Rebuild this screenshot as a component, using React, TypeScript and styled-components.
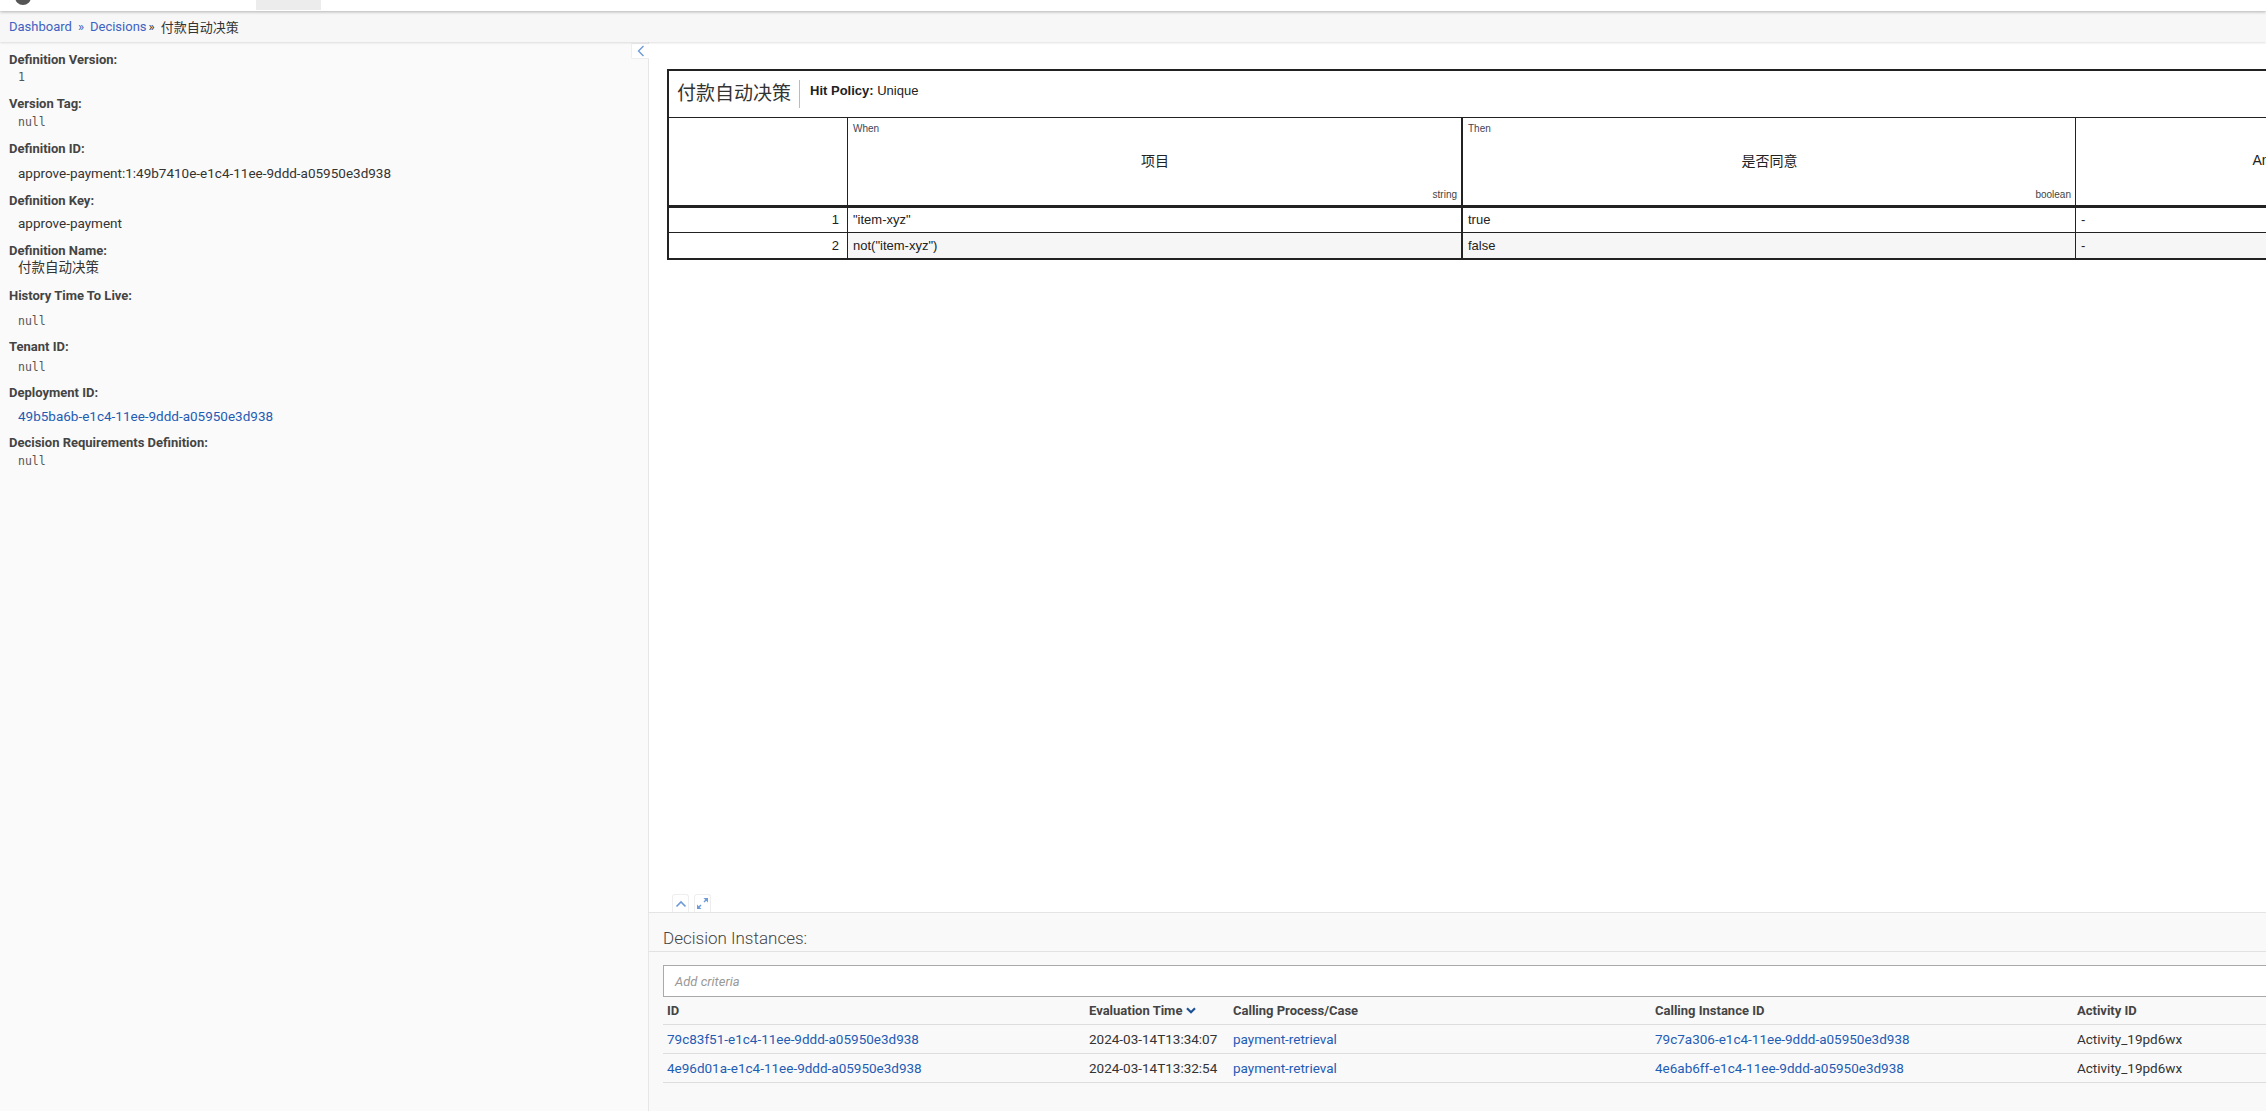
import React from "react";
import styled, { createGlobalStyle } from "styled-components";

const UI_FONT = `Roboto, "Noto Sans CJK SC", sans-serif`;
const DMN_FONT = `"Liberation Sans", Arial, "Noto Sans CJK SC", sans-serif`;
const MONO_FONT = `"DejaVu Sans Mono", "Liberation Mono", monospace`;
const LINK = "#1f5cb4";

const GlobalStyle = createGlobalStyle`
  * { box-sizing: border-box; }
  html, body { margin: 0; padding: 0; height: 100%; overflow: hidden; }
  body { font-family: ${UI_FONT}; color: #333; background: #fff; }
  #root { height: 100%; }
`;

interface Field {
  label: string;
  value: string;
  kind: "mono" | "text" | "link";
  spaceBefore: number;
  valueGap: number;
}

const fields: Field[] = [
  { label: "Definition Version:", value: "1", kind: "mono", spaceBefore: 0, valueGap: 1 },
  { label: "Version Tag:", value: "null", kind: "mono", spaceBefore: 11, valueGap: 2 },
  { label: "Definition ID:", value: "approve-payment:1:49b7410e-e1c4-11ee-9ddd-a05950e3d938", kind: "text", spaceBefore: 11, valueGap: 8 },
  { label: "Definition Key:", value: "approve-payment", kind: "text", spaceBefore: 12, valueGap: 6 },
  { label: "Definition Name:", value: "付款自动决策", kind: "text", spaceBefore: 12, valueGap: 0 },
  { label: "History Time To Live:", value: "null", kind: "mono", spaceBefore: 13, valueGap: 9 },
  { label: "Tenant ID:", value: "null", kind: "mono", spaceBefore: 10, valueGap: 4 },
  { label: "Deployment ID:", value: "49b5ba6b-e1c4-11ee-9ddd-a05950e3d938", kind: "link", spaceBefore: 10, valueGap: 7 },
  { label: "Decision Requirements Definition:", value: "null", kind: "mono", spaceBefore: 11, valueGap: 2 },
];

const instances = [
  {
    id: "79c83f51-e1c4-11ee-9ddd-a05950e3d938",
    time: "2024-03-14T13:34:07",
    process: "payment-retrieval",
    instance: "79c7a306-e1c4-11ee-9ddd-a05950e3d938",
    activity: "Activity_19pd6wx",
  },
  {
    id: "4e96d01a-e1c4-11ee-9ddd-a05950e3d938",
    time: "2024-03-14T13:32:54",
    process: "payment-retrieval",
    instance: "4e6ab6ff-e1c4-11ee-9ddd-a05950e3d938",
    activity: "Activity_19pd6wx",
  },
];

const rules = [
  { index: 1, input: `"item-xyz"`, output: "true", note: "-" },
  { index: 2, input: `not("item-xyz")`, output: "false", note: "-" },
];

const Page = styled.div`
  height: 100vh;
  display: flex;
  flex-direction: column;
`;

const TopBar = styled.header`
  position: relative;
  z-index: 3;
  height: 11px;
  flex: none;
  background: #fff;
  box-shadow: 0 1px 3px rgba(0, 0, 0, 0.28);
  display: flex;
  align-items: flex-start;
  overflow: hidden;
`;

const Logo = styled.div`
  width: 16px;
  height: 16px;
  margin: -11px 0 0 15px;
  border-radius: 50%;
  background: #555;
`;

const ActiveTab = styled.div`
  width: 65px;
  height: 10px;
  margin-left: 225px;
  background: #ececec;
`;

const Crumbs = styled.nav`
  position: relative;
  z-index: 2;
  height: 31px;
  flex: none;
  display: flex;
  align-items: center;
  padding-left: 9px;
  background: #f7f7f7;
  box-shadow: 0 1px 2px rgba(0, 0, 0, 0.12);
  font-size: 13px;
`;

const CrumbLink = styled.a`
  color: #3e62c2;
  text-decoration: none;
`;

const CrumbSep = styled.span<{ $before: number; $after: number; $dark?: boolean }>`
  color: ${(p) => (p.$dark ? "#333" : "#3e62c2")};
  font-size: 13px;
  margin: 0 ${(p) => p.$after}px 0 ${(p) => p.$before}px;
`;

const CrumbCurrent = styled.span`
  color: #333;
`;

const Body = styled.div`
  flex: 1;
  display: flex;
  min-height: 0;
`;

const Sidebar = styled.aside`
  position: relative;
  width: 649px;
  flex: none;
  background: #fafafa;
  border-right: 1px solid #e6e6e6;
  padding: 10px 0 0 9px;
`;

const CollapseButton = styled.button`
  position: absolute;
  top: 1px;
  right: -1px;
  width: 18px;
  height: 16px;
  padding: 0;
  display: flex;
  align-items: center;
  justify-content: center;
  background: #fff;
  border: 1px solid #eee;
  border-right: none;
  border-radius: 2px 0 0 2px;
`;

const FieldBlock = styled.dl<{ $space: number }>`
  margin: ${(p) => p.$space}px 0 0 0;
`;

const FieldLabel = styled.dt`
  font-size: 13px;
  line-height: 16px;
  font-weight: 700;
  color: #444;
`;

const FieldValue = styled.dd<{ $gap: number; $kind: Field["kind"] }>`
  margin: ${(p) => p.$gap}px 0 0 9px;
  line-height: 16px;
  font-family: ${(p) => (p.$kind === "mono" ? MONO_FONT : UI_FONT)};
  font-size: ${(p) => (p.$kind === "mono" ? "11.5px" : "13.5px")};
  color: ${(p) => (p.$kind === "link" ? LINK : p.$kind === "mono" ? "#555" : "#333")};
`;

const Main = styled.main`
  flex: 1;
  min-width: 0;
  display: flex;
  flex-direction: column;
  overflow: hidden;
`;

const Canvas = styled.section`
  flex: 1;
  display: flex;
  flex-direction: column;
  justify-content: space-between;
  padding: 27px 0 0 18px;
  background: #fff;
  overflow: hidden;
`;

const DmnBox = styled.div`
  width: 1830px;
  flex: none;
  border: 2px solid #222;
  font-family: ${DMN_FONT};
  color: #222;
`;

const DmnTitleRow = styled.div`
  height: 47px;
  display: flex;
  align-items: center;
  border-bottom: 1px solid #222;
  padding-left: 8px;
`;

const DmnName = styled.div`
  font-size: 19px;
  padding-right: 8px;
  border-right: 1px solid #bbb;
  line-height: 28px;
  height: 28px;
  color: #333;
`;

const HitPolicy = styled.div`
  font-size: 13px;
  padding-left: 10px;
  margin-top: -7px;
  b { font-weight: 700; }
`;

const DmnTable = styled.table`
  width: 100%;
  border-collapse: separate;
  border-spacing: 0;
  table-layout: fixed;
  font-size: 13px;
`;

const HeadCell = styled.th<{ $thickRight?: boolean; $last?: boolean }>`
  padding: 0;
  font-weight: 400;
  border-bottom: 3px solid #222;
  border-right: ${(p) => (p.$last ? "none" : p.$thickRight ? "2px solid #222" : "1px solid #222")};
`;

const HeadInner = styled.div`
  height: 87px;
  display: flex;
  flex-direction: column;
  padding: 5px 4px 4px 5px;
`;

const Clause = styled.span`
  font-size: 10px;
  line-height: 12px;
  color: #445;
  text-align: left;
`;

const ColumnName = styled.span`
  flex: 1;
  display: flex;
  align-items: center;
  justify-content: center;
  font-size: 14px;
  padding-bottom: 4px;
`;

const TypeRef = styled.span`
  font-size: 10px;
  line-height: 12px;
  color: #444;
  text-align: right;
`;

const RuleCell = styled.td<{ $thickRight?: boolean; $last?: boolean; $shade?: boolean; $index?: boolean; $height: number }>`
  padding: 0 5px;
  height: ${(p) => p.$height}px;
  line-height: ${(p) => p.$height}px;
  white-space: nowrap;
  text-align: ${(p) => (p.$index ? "right" : "left")};
  padding-right: ${(p) => (p.$index ? "8px" : "5px")};
  background: ${(p) => (p.$shade && !p.$index ? "#f6f6f6" : "#fff")};
  border-bottom: ${(p) => (p.$last ? "none" : "1px solid #222")};
  border-right: ${(p) => (p.$thickRight ? "2px solid #222" : "1px solid #222")};
  &:last-child { border-right: none; }
`;

const CanvasTools = styled.div`
  display: flex;
  gap: 5px;
  padding-left: 5px;
`;

const ToolButton = styled.button`
  width: 17px;
  height: 18px;
  padding: 0;
  display: flex;
  align-items: center;
  justify-content: center;
  background: #fff;
  border: 1px solid #eee;
  border-bottom: none;
  border-radius: 3px 3px 0 0;
`;

const Instances = styled.section`
  height: 199px;
  flex: none;
  background: #f9f9f9;
  border-top: 1px solid #e4e4e4;
`;

const InstancesHeading = styled.h3`
  margin: 0;
  height: 39px;
  display: flex;
  align-items: center;
  padding: 11px 0 0 14px;
  font-size: 17px;
  font-weight: 300;
  color: #444;
  border-bottom: 1px solid #e2e2e2;
`;

const Criteria = styled.div`
  margin: 13px 0 0 14px;
  width: 1700px;
  height: 32px;
  display: flex;
  align-items: center;
  padding-left: 11px;
  background: #fff;
  border: 1px solid #aaa;
  font-size: 13px;
  font-style: italic;
  color: #999;
`;

const InstanceTable = styled.table`
  margin-left: 14px;
  width: 1700px;
  border-collapse: collapse;
  table-layout: fixed;
  font-size: 13.5px;
`;

const Th = styled.th<{ $w: number }>`
  width: ${(p) => p.$w}px;
  height: 27px;
  padding: 0 4px;
  text-align: left;
  font-size: 13px;
  font-weight: 700;
  color: #444;
  border-bottom: 1px solid #ddd;
  white-space: nowrap;
`;

const SortIcon = styled.svg`
  margin-left: 4px;
  vertical-align: 1px;
`;

const Td = styled.td<{ $link?: boolean }>`
  height: 29px;
  padding: 0 4px;
  color: ${(p) => (p.$link ? LINK : "#333")};
  border-bottom: 1px solid #ddd;
  white-space: nowrap;
`;

const columns = [
  { title: "ID", w: 422 },
  { title: "Evaluation Time", w: 144, sort: true },
  { title: "Calling Process/Case", w: 422 },
  { title: "Calling Instance ID", w: 422 },
  { title: "Activity ID", w: 290 },
];

const App: React.FC = () => {
  return (
    <Page>
      <GlobalStyle />
      <TopBar>
        <Logo />
        <ActiveTab />
      </TopBar>
      <Crumbs>
        <CrumbLink href="#">Dashboard</CrumbLink>
        <CrumbSep $before={6} $after={6}>»</CrumbSep>
        <CrumbLink href="#">Decisions</CrumbLink>
        <CrumbSep $before={2} $after={6} $dark>»</CrumbSep>
        <CrumbCurrent>付款自动决策</CrumbCurrent>
      </Crumbs>
      <Body>
        <Sidebar>
          {fields.map((f) => (
            <FieldBlock key={f.label} $space={f.spaceBefore}>
              <FieldLabel>{f.label}</FieldLabel>
              <FieldValue $gap={f.valueGap} $kind={f.kind}>
                {f.value}
              </FieldValue>
            </FieldBlock>
          ))}
          <CollapseButton aria-label="collapse">
            <svg width="8" height="12" viewBox="0 0 8 12">
              <polyline points="6.5,1 1.5,6 6.5,11" fill="none" stroke="#6e9ad6" strokeWidth="1.4" />
            </svg>
          </CollapseButton>
        </Sidebar>
        <Main>
          <Canvas>
            <DmnBox>
              <DmnTitleRow>
                <DmnName>付款自动决策</DmnName>
                <HitPolicy>
                  <b>Hit Policy:</b> Unique
                </HitPolicy>
              </DmnTitleRow>
              <DmnTable>
                <colgroup>
                  <col style={{ width: 179 }} />
                  <col style={{ width: 615 }} />
                  <col style={{ width: 613 }} />
                  <col />
                </colgroup>
                <thead>
                  <tr>
                    <HeadCell>
                      <HeadInner />
                    </HeadCell>
                    <HeadCell $thickRight>
                      <HeadInner>
                        <Clause>When</Clause>
                        <ColumnName>项目</ColumnName>
                        <TypeRef>string</TypeRef>
                      </HeadInner>
                    </HeadCell>
                    <HeadCell>
                      <HeadInner>
                        <Clause>Then</Clause>
                        <ColumnName>是否同意</ColumnName>
                        <TypeRef>boolean</TypeRef>
                      </HeadInner>
                    </HeadCell>
                    <HeadCell $last>
                      <HeadInner>
                        <Clause>&nbsp;</Clause>
                        <ColumnName>Annotation</ColumnName>
                        <TypeRef>&nbsp;</TypeRef>
                      </HeadInner>
                    </HeadCell>
                  </tr>
                </thead>
                <tbody>
                  {rules.map((r, i) => {
                    const last = i === rules.length - 1;
                    const h = last ? 25 : 24;
                    const shade = i % 2 === 1;
                    return (
                      <tr key={r.index}>
                        <RuleCell $index $last={last} $shade={shade} $height={h}>
                          {r.index}
                        </RuleCell>
                        <RuleCell $thickRight $last={last} $shade={shade} $height={h}>
                          {r.input}
                        </RuleCell>
                        <RuleCell $last={last} $shade={shade} $height={h}>
                          {r.output}
                        </RuleCell>
                        <RuleCell $last={last} $shade={shade} $height={h}>
                          {r.note}
                        </RuleCell>
                      </tr>
                    );
                  })}
                </tbody>
              </DmnTable>
            </DmnBox>
            <CanvasTools>
              <ToolButton aria-label="collapse diagram">
                <svg width="12" height="8" viewBox="0 0 12 8">
                  <polyline points="1.5,6.5 6,2 10.5,6.5" fill="none" stroke="#6e9ad6" strokeWidth="1.6" />
                </svg>
              </ToolButton>
              <ToolButton aria-label="maximize">
                <svg width="13" height="13" viewBox="0 0 13 13" fill="#6e9ad6" stroke="#6e9ad6">
                  <line x1="8" y1="5" x2="10" y2="3" strokeWidth="1.5" />
                  <polygon points="7.5,1 12,1 12,5.5" stroke="none" />
                  <line x1="5" y1="8" x2="3" y2="10" strokeWidth="1.5" />
                  <polygon points="1,7.5 1,12 5.5,12" stroke="none" />
                </svg>
              </ToolButton>
            </CanvasTools>
          </Canvas>
          <Instances>
            <InstancesHeading>Decision Instances:</InstancesHeading>
            <Criteria>Add criteria</Criteria>
            <InstanceTable>
              <thead>
                <tr>
                  {columns.map((c) => (
                    <Th key={c.title} $w={c.w}>
                      {c.title}
                      {c.sort && (
                        <SortIcon width="10" height="7" viewBox="0 0 10 7">
                          <polyline points="1,1.2 5,5.2 9,1.2" fill="none" stroke="#1d5196" strokeWidth="2.2" />
                        </SortIcon>
                      )}
                    </Th>
                  ))}
                </tr>
              </thead>
              <tbody>
                {instances.map((row) => (
                  <tr key={row.id}>
                    <Td $link>{row.id}</Td>
                    <Td>{row.time}</Td>
                    <Td $link>{row.process}</Td>
                    <Td $link>{row.instance}</Td>
                    <Td>{row.activity}</Td>
                  </tr>
                ))}
              </tbody>
            </InstanceTable>
          </Instances>
        </Main>
      </Body>
    </Page>
  );
};

export default App;
